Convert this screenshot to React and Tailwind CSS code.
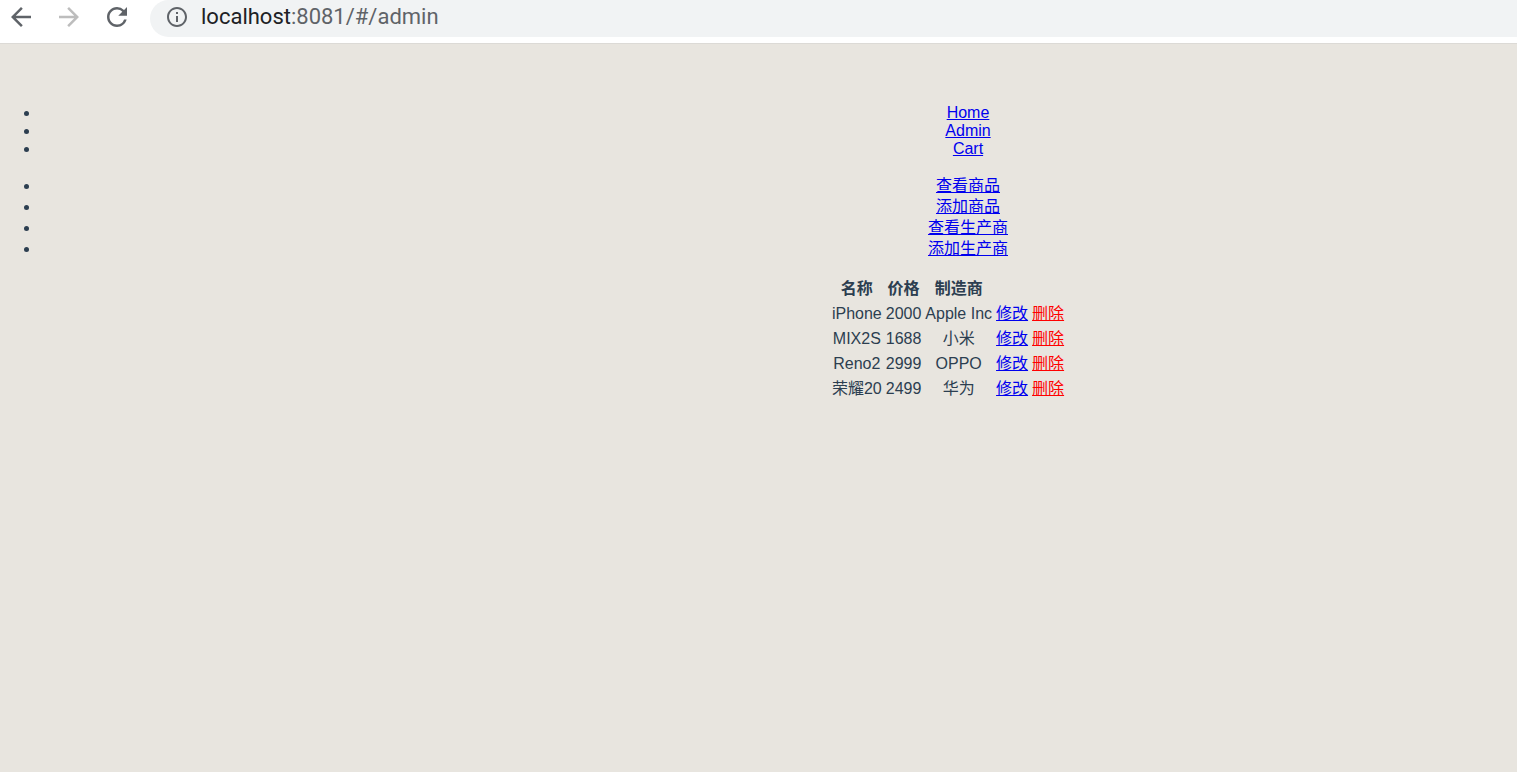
import React from "react"

const navLinks = ["Home", "Admin", "Cart"]
const adminLinks = ["查看商品", "添加商品", "查看生产商", "添加生产商"]
const products = [
  { name: "iPhone", price: 2000, maker: "Apple Inc" },
  { name: "MIX2S", price: 1688, maker: "小米" },
  { name: "Reno2", price: 2999, maker: "OPPO" },
  { name: "荣耀20", price: 2499, maker: "华为" },
]

function Icon({ d, className }) {
  return (
    <svg viewBox="0 0 24 24" className={className} fill="currentColor">
      <path d={d} />
    </svg>
  )
}

function BrowserBar() {
  return (
    <div className="h-[44px] bg-white border-b border-[#dcdad6] flex items-start">
      <div className="w-[150px] h-[33px] flex items-center shrink-0">
        <Icon className="w-[30px] h-[30px] ml-[6px] text-[#5f6368]" d="M20 11H7.83l5.59-5.59L12 4l-8 8 8 8 1.41-1.41L7.83 13H20v-2z" />
        <Icon className="w-[30px] h-[30px] ml-[18px] text-[#bdbdbd]" d="M12 4l-1.41 1.41L16.17 11H4v2h12.17l-5.58 5.59L12 20l8-8z" />
        <Icon className="w-[30px] h-[30px] ml-[18px] text-[#5f6368]" d="M17.65 6.35A7.958 7.958 0 0012 4c-4.42 0-7.99 3.58-7.99 8s3.57 8 7.99 8c3.73 0 6.84-2.55 7.73-6h-2.08A5.99 5.99 0 0112 18c-3.31 0-6-2.69-6-6s2.69-6 6-6c1.66 0 3.14.69 4.22 1.78L13 11h7V4l-2.35 2.35z" />
      </div>
      <div className="flex-1 h-[37px] bg-[#f1f3f4] rounded-l-[19px] flex items-center pl-[15px] pb-[4px]">
        <Icon className="w-[24px] h-[24px] text-[#5f6368]" d="M11 7h2v2h-2zm0 4h2v6h-2zm1-9C6.48 2 2 6.48 2 12s4.48 10 10 10 10-4.48 10-10S17.52 2 12 2zm0 18c-4.41 0-8-3.59-8-8s3.59-8 8-8 8 3.59 8 8-3.59 8-8 8z" />
        <span className="ml-[12px] text-[22px] leading-none font-['Roboto',sans-serif] text-[#202124]">
          localhost<span className="text-[#5f6368]">:8081/#/admin</span>
        </span>
      </div>
    </div>
  )
}

export default function App() {
  return (
    <div className="w-[1517px] h-[772px] overflow-hidden bg-[#e8e5df]">
      <BrowserBar />
      <div className="h-[728px] overflow-hidden">
        <div className="w-[1896px] pt-[60px] text-center text-[16px] text-[#2c3e50] font-['Liberation_Sans','Noto_Sans_CJK_SC',sans-serif]">
          <ul className="list-disc pl-10 mb-[17px]">
            {navLinks.map((l) => (
              <li key={l} className="leading-[18px]">
                <a href="#" className="text-[#0000ee] underline">{l}</a>
              </li>
            ))}
          </ul>
          <ul className="list-disc pl-10 mb-4">
            {adminLinks.map((l) => (
              <li key={l} className="leading-[21px]">
                <a href="#" className="text-[#0000ee] underline">{l}</a>
              </li>
            ))}
          </ul>
          <table className="mx-auto border-separate border-spacing-[2px]">
            <thead>
              <tr>
                <th className="p-px leading-[21px] font-bold">名称</th>
                <th className="p-px leading-[21px] font-bold">价格</th>
                <th className="p-px leading-[21px] font-bold">制造商</th>
              </tr>
            </thead>
            <tbody>
              {products.map((p) => (
                <tr key={p.name}>
                  <td className="p-px leading-[21px]">{p.name}</td>
                  <td className="p-px leading-[21px]">{p.price}</td>
                  <td className="p-px leading-[21px]">{p.maker}</td>
                  <td className="p-px leading-[21px]">
                    <a href="#" className="text-[#0000ee] underline">修改</a>
                  </td>
                  <td className="p-px leading-[21px]">
                    <a href="#" className="text-[#ff0000] underline">删除</a>
                  </td>
                </tr>
              ))}
            </tbody>
          </table>
        </div>
      </div>
    </div>
  )
}
